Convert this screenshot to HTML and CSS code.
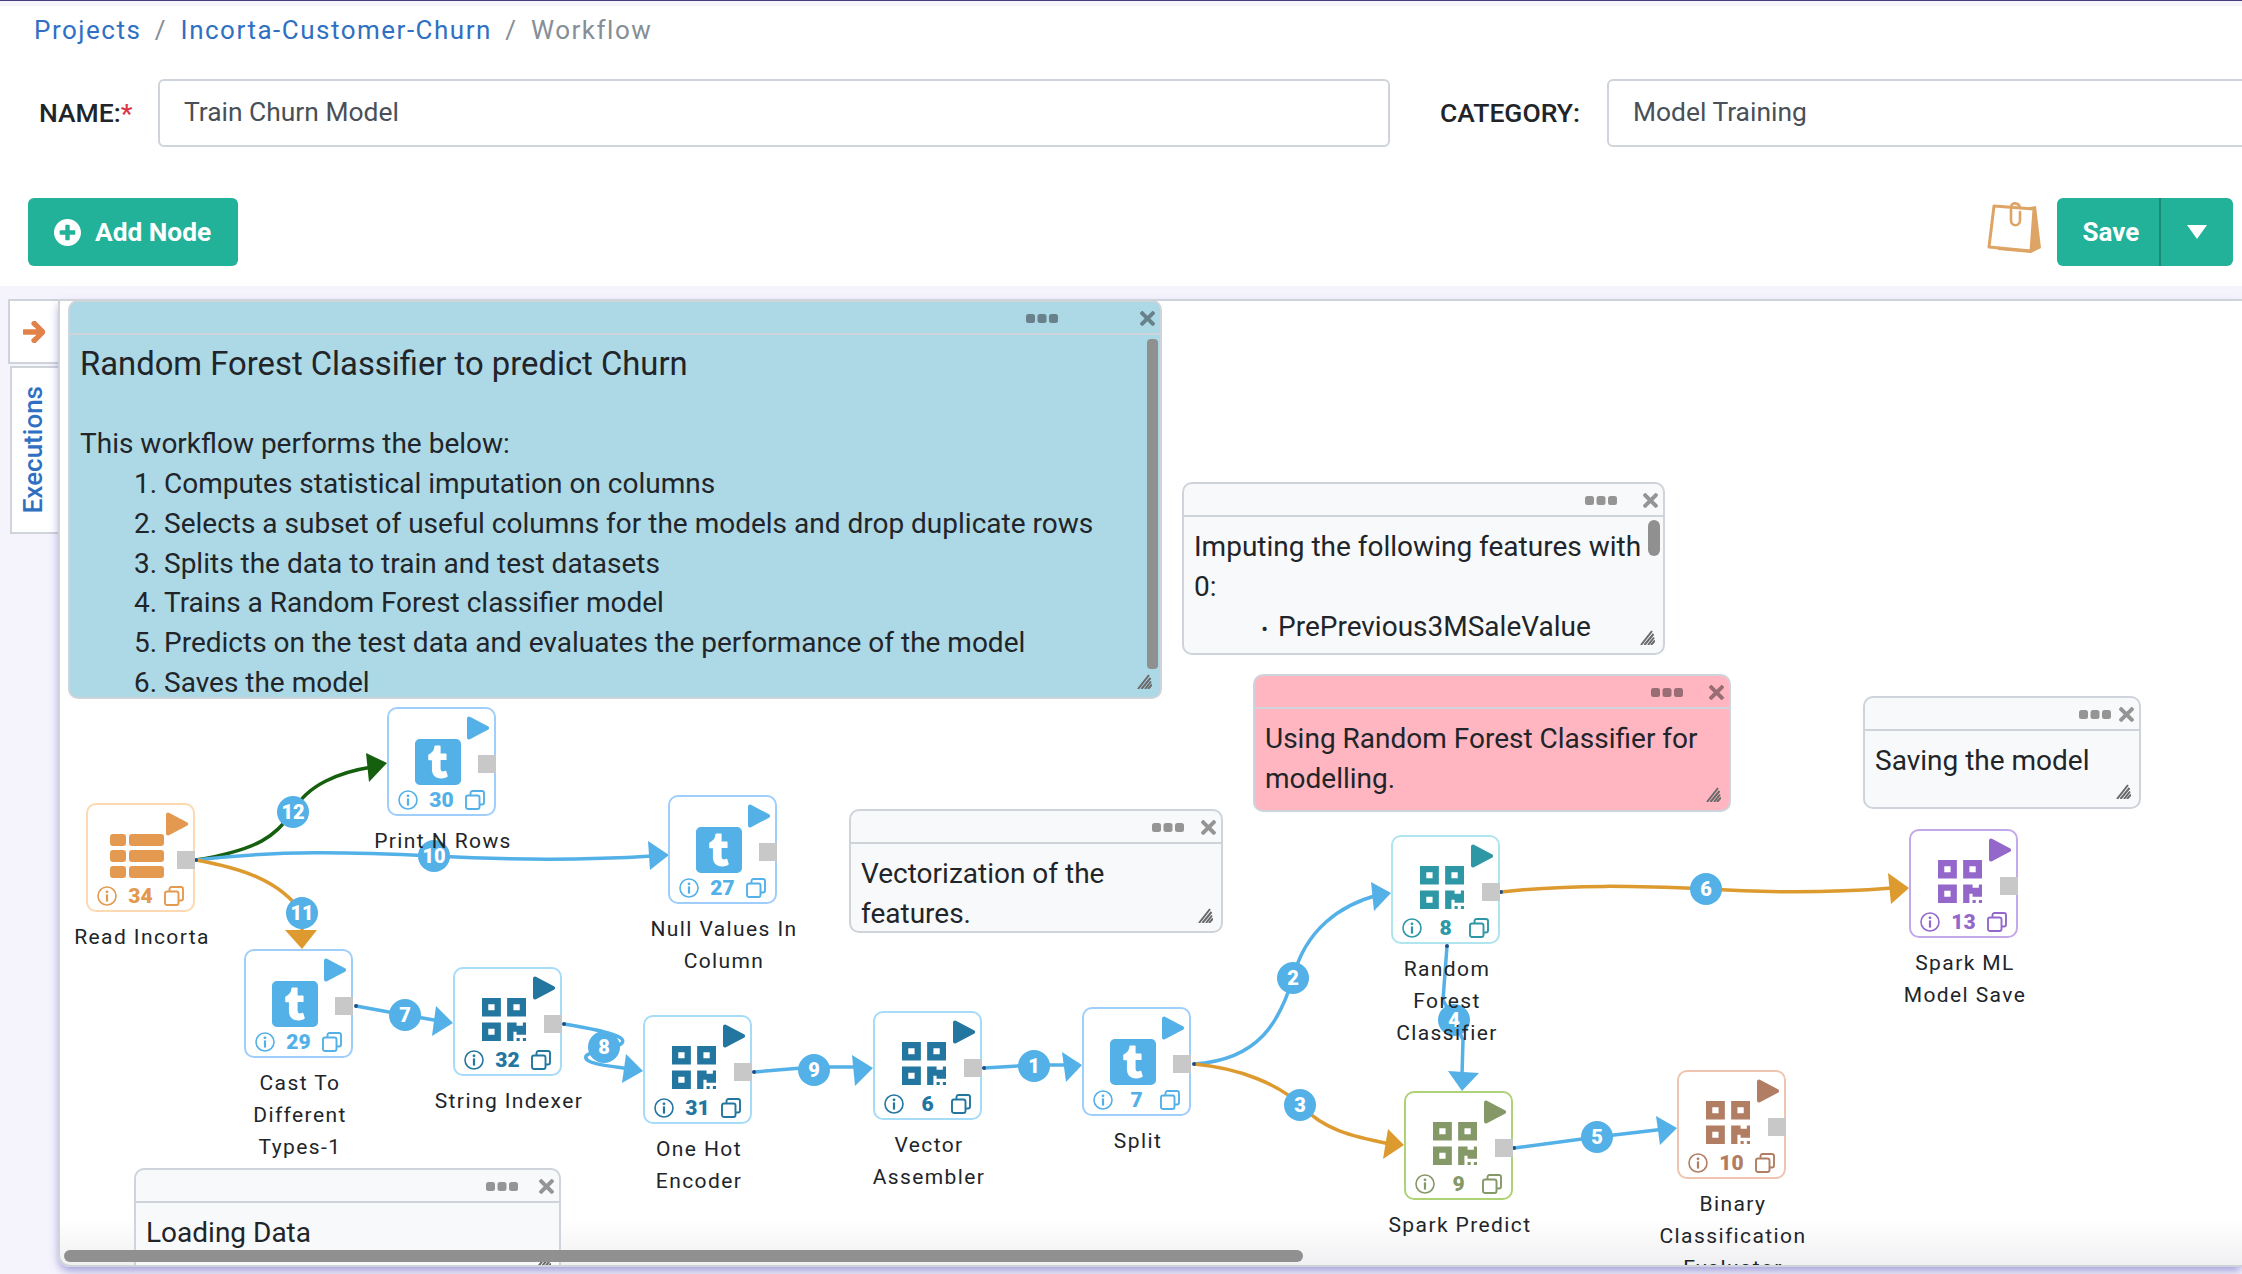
FILE: index.html
```html
<!DOCTYPE html>
<html lang="en">
<head>
  <meta charset="UTF-8" />
  <meta name="viewport" content="width=device-width, initial-scale=1.0"/>
  <title>Workflow</title>
  <link rel="stylesheet" href="styles.css">
</head>
<body>

  <!-- icon sprite -->
  <svg class="sprite" aria-hidden="true">
    <symbol id="i-plus" viewBox="8 8 496 496"><path fill="currentColor" d="M256 8C119 8 8 119 8 256s111 248 248 248 248-111 248-248S393 8 256 8zm144 276c0 6.6-5.4 12-12 12h-92v92c0 6.6-5.4 12-12 12h-56c-6.6 0-12-5.4-12-12v-92h-92c-6.6 0-12-5.4-12-12v-56c0-6.6 5.4-12 12-12h92v-92c0-6.6 5.4-12 12-12h56c6.6 0 12 5.4 12 12v92h92c6.6 0 12 5.4 12 12v56z"/></symbol>
    <symbol id="i-arrow" viewBox="0 32 448 448"><path fill="currentColor" d="M190.5 66.9l22.2-22.2c9.4-9.4 24.6-9.4 33.9 0L441 239c9.4 9.4 9.4 24.6 0 33.9L246.6 467.3c-9.4 9.4-24.6 9.4-33.9 0l-22.2-22.2c-9.5-9.5-9.3-25 .4-34.3L311.4 296H24c-13.3 0-24-10.7-24-24v-32c0-13.3 10.7-24 24-24h287.4L190.9 101.2c-9.8-9.3-10-24.8-.4-34.3z"/></symbol>
    <symbol id="i-close" viewBox="0 80 352 352"><path fill="currentColor" d="M242.72 256l100.07-100.07c12.28-12.28 12.28-32.19 0-44.48l-22.24-22.24c-12.28-12.28-32.19-12.28-44.48 0L176 189.28 75.93 89.21c-12.28-12.28-32.19-12.28-44.48 0L9.21 111.45c-12.28 12.28-12.28 32.19 0 44.48L109.28 256 9.21 356.07c-12.28 12.28-12.28 32.19 0 44.48l22.24 22.24c12.28 12.28 32.2 12.28 44.48 0L176 322.72l100.07 100.07c12.28 12.28 32.2 12.28 44.48 0l22.24-22.24c12.28-12.28 12.28-32.19 0-44.48L242.72 256z"/></symbol>
    <symbol id="i-dots" viewBox="0 0 32 9"><rect width="9" height="9" rx="2.5" fill="currentColor"/><rect x="11.5" width="9" height="9" rx="2.5" fill="currentColor"/><rect x="23" width="9" height="9" rx="2.5" fill="currentColor"/></symbol>
    <symbol id="i-grip" viewBox="0 0 15 15"><path fill="none" stroke="currentColor" stroke-width="2" d="M1 15L12 1M4.5 15L13.5 4M8 15L14 7.5M11 15L15 10.5"/></symbol>
    <symbol id="i-play" viewBox="0 0 22 24"><path fill="currentColor" stroke="currentColor" stroke-width="4" stroke-linejoin="round" d="M2 2.5L20 12L2 21.5z"/></symbol>
    <symbol id="i-info" viewBox="0 0 20 20"><circle cx="10" cy="10" r="9" fill="none" stroke="currentColor" stroke-width="1.6"/><circle cx="10" cy="5.8" r="1.4" fill="currentColor"/><rect x="8.9" y="8.4" width="2.2" height="7.2" fill="currentColor"/></symbol>
    <symbol id="i-copy" viewBox="0 0 20 20"><rect x="1" y="5.5" width="13.5" height="13.5" rx="2" fill="none" stroke="currentColor" stroke-width="1.9"/><path fill="none" stroke="currentColor" stroke-width="1.9" d="M5.5 5.5V3a2 2 0 0 1 2-2H17a2 2 0 0 1 2 2v9.5a2 2 0 0 1-2 2h-2.5"/></symbol>
    <symbol id="i-table" viewBox="0 0 54 44"><g fill="currentColor"><rect width="16" height="12" rx="3"/><rect x="19" width="35" height="12" rx="3"/><rect y="16" width="16" height="12" rx="3"/><rect x="19" y="16" width="35" height="12" rx="3"/><rect y="32" width="16" height="12" rx="3"/><rect x="19" y="32" width="35" height="12" rx="3"/></g></symbol>
    <symbol id="i-tumblr" viewBox="0 32 448 448"><path fill="currentColor" d="M400 32H48C21.5 32 0 53.5 0 80v352c0 26.5 21.5 48 48 48h352c26.5 0 48-21.5 48-48V80c0-26.5-21.5-48-48-48zm-82.3 364.2c-8.5 9.1-31.2 19.8-60.9 19.8-75.5 0-91.9-55.5-91.9-87.9v-90h-29.7c-3.4 0-6.2-2.8-6.2-6.2v-42.5c0-4.5 2.8-8.5 7.1-10 38.8-13.7 50.9-47.5 52.7-73.2.5-6.9 4.1-10.2 10-10.2h44.3c3.4 0 6.2 2.8 6.2 6.2v72h51.9c3.4 0 6.2 2.8 6.2 6.2v51.1c0 3.4-2.8 6.2-6.2 6.2h-52.1V321c0 21.4 14.8 33.5 42.5 22.4 3-1.2 5.6-2 8-1.4 2.2.5 3.6 2.1 4.6 4.9l13.8 40.2c1 3.2 2 6.7-.3 9.1z"/></symbol>
    <symbol id="i-qr" viewBox="0 32 448 448" preserveAspectRatio="none"><path fill="currentColor" d="M0 224h192V32H0v192zM64 96h64v64H64V96zm192-64v192h192V32H256zm128 128h-64V96h64v64zM0 480h192V288H0v192zm64-128h64v64H64v-64zm352-64h32v128h-96v-32h-32v96h-64V288h96v32h64v-32zm0 160h32v32h-32v-32zm-64 0h32v32h-32v-32z"/></symbol>
  </svg>

  <header class="header">
    <nav class="crumbs">
      <a class="crumb-link">Projects</a><span class="crumb-sep">/</span>
      <a class="crumb-link">Incorta-Customer-Churn</a><span class="crumb-sep">/</span>
      <span class="crumb-now">Workflow</span>
    </nav>

    <div class="form-row">
      <label class="form-label form-label-name">NAME:<span class="req">*</span></label>
      <input class="form-input form-input-name" type="text" value="Train Churn Model" />
      <label class="form-label form-label-cat">CATEGORY:</label>
      <input class="form-input form-input-cat" type="text" value="Model Training" />
    </div>

    <div class="action-row">
      <button class="btn btn-add">
        <svg class="btn-icon"><use href="#i-plus"/></svg>Add Node
      </button>
      <div class="action-right">
        <svg class="sticky" viewBox="0 0 54 52">
          <path fill="#dea465" d="M38 6L49 4L54 46L44 51L11 48L11 44L42 46z"/>
          <path fill="#fff" stroke="#dea465" stroke-width="3" stroke-linejoin="round" d="M7 4L47 7L44 49L2 45z"/>
          <path fill="none" stroke="#dea465" stroke-width="2.6" stroke-linecap="round" d="M33 6C32 0 24 0 24 5V18C24 25 33 25 33 18V10"/>
        </svg>
        <div class="save-group">
          <button class="btn btn-save">Save</button>
          <button class="btn btn-caret"><span class="caret"></span></button>
        </div>
      </div>
    </div>
  </header>

  <div class="workspace">
    <aside class="side">
      <div class="side-arrow"><svg class="side-arrow-icon"><use href="#i-arrow"/></svg></div>
      <div class="side-tab"><span class="side-tab-text">Executions</span></div>
    </aside>

    <main class="canvas">
      <!-- edges use page coordinates -->
      <svg class="edges" viewBox="60 301 2182 966">
        <g class="edge edge-green">
          <path d="M196 860C268 848 276 832 293 812C306 785 340 772 372 767"/>
          <polygon points="387,763 366,753 369,782"/>
        </g>
        <g class="edge edge-blue">
          <path d="M196 860C280 850 350 852 434 856C510 860 590 860 652 856"/>
          <polygon points="669,855 648,841 650,870"/>
        </g>
        <g class="edge edge-orange">
          <path d="M196 860C240 868 280 880 302 913V934"/>
          <polygon points="302,949 285,930 317,930"/>
        </g>
        <g class="edge edge-blue">
          <path d="M356 1006L405 1015L440 1021"/>
          <polygon points="453,1023 436,1006 432,1036"/>
        </g>
        <g class="edge edge-blue">
          <path d="M564 1024C600 1030 628 1036 622 1043C616 1050 590 1050 586 1056C583 1064 610 1066 630 1069"/>
          <polygon points="643,1071 626,1054 622,1083"/>
        </g>
        <g class="edge edge-blue">
          <path d="M754 1072L814 1067L860 1067"/>
          <polygon points="873,1068 852,1055 855,1086"/>
        </g>
        <g class="edge edge-blue">
          <path d="M984 1068L1034 1065L1070 1065"/>
          <polygon points="1082,1065 1062,1052 1066,1082"/>
        </g>
        <g class="edge edge-blue">
          <path d="M1194 1064C1260 1060 1280 1020 1293 978C1305 930 1340 905 1378 895"/>
          <polygon points="1391,893 1371,882 1374,911"/>
        </g>
        <g class="edge edge-orange">
          <path d="M1194 1064C1240 1068 1280 1085 1300 1105C1325 1130 1350 1136 1390 1144"/>
          <polygon points="1404,1145 1388,1129 1383,1159"/>
        </g>
        <g class="edge edge-blue">
          <path d="M1447 946L1443 1000L1454 1020L1463 1040L1462 1075"/>
          <polygon points="1462,1091 1448,1071 1479,1073"/>
        </g>
        <g class="edge edge-orange">
          <path d="M1501 892C1570 884 1640 886 1706 889C1770 893 1830 893 1892 888"/>
          <polygon points="1909,888 1888,873 1891,904"/>
        </g>
        <g class="edge edge-blue">
          <path d="M1514 1148L1597 1137L1665 1129"/>
          <polygon points="1677,1128 1656,1116 1660,1145"/>
        </g>

        <g class="edge-starts">
          <circle cx="196" cy="860" r="2"/><circle cx="356" cy="1006" r="2"/><circle cx="564" cy="1024" r="2"/>
          <circle cx="754" cy="1072" r="2"/><circle cx="984" cy="1068" r="2"/><circle cx="1194" cy="1064" r="2"/>
          <circle cx="1447" cy="946" r="2"/><circle cx="1501" cy="892" r="2"/><circle cx="1514" cy="1148" r="2"/>
        </g>

        <g class="badges">
          <circle cx="293" cy="812" r="16"/><text x="293" y="812">12</text>
          <circle cx="434" cy="856" r="16"/><text x="434" y="856">10</text>
          <circle cx="302" cy="913" r="16"/><text x="302" y="913">11</text>
          <circle cx="405" cy="1015" r="16"/><text x="405" y="1015">7</text>
          <circle cx="604" cy="1047" r="16"/><text x="604" y="1047">8</text>
          <circle cx="814" cy="1070" r="16"/><text x="814" y="1070">9</text>
          <circle cx="1034" cy="1066" r="16"/><text x="1034" y="1066">1</text>
          <circle cx="1293" cy="978" r="16"/><text x="1293" y="978">2</text>
          <circle cx="1300" cy="1105" r="16"/><text x="1300" y="1105">3</text>
          <circle cx="1454" cy="1020" r="16"/><text x="1454" y="1020">4</text>
          <circle cx="1706" cy="889" r="16"/><text x="1706" y="889">6</text>
          <circle cx="1597" cy="1137" r="16"/><text x="1597" y="1137">5</text>
        </g>
      </svg>

      <div class="node node-read tone-orange">
        <div class="node-box">
          <svg class="node-play"><use href="#i-play"/></svg>
          <svg class="node-icon node-icon-table"><use href="#i-table"/></svg>
          <span class="node-port"></span>
          <div class="node-foot"><svg class="foot-icon"><use href="#i-info"/></svg><b>34</b><svg class="foot-icon"><use href="#i-copy"/></svg></div>
        </div>
        <div class="node-label">Read Incorta</div>
      </div>

      <div class="node node-print tone-sky">
        <div class="node-box">
          <svg class="node-play"><use href="#i-play"/></svg>
          <svg class="node-icon node-icon-t"><use href="#i-tumblr"/></svg>
          <span class="node-port"></span>
          <div class="node-foot"><svg class="foot-icon"><use href="#i-info"/></svg><b>30</b><svg class="foot-icon"><use href="#i-copy"/></svg></div>
        </div>
        <div class="node-label">Print N Rows</div>
      </div>

      <div class="node node-null tone-sky">
        <div class="node-box">
          <svg class="node-play"><use href="#i-play"/></svg>
          <svg class="node-icon node-icon-t"><use href="#i-tumblr"/></svg>
          <span class="node-port"></span>
          <div class="node-foot"><svg class="foot-icon"><use href="#i-info"/></svg><b>27</b><svg class="foot-icon"><use href="#i-copy"/></svg></div>
        </div>
        <div class="node-label">Null Values In<br>Column</div>
      </div>

      <div class="node node-cast tone-sky">
        <div class="node-box">
          <svg class="node-play"><use href="#i-play"/></svg>
          <svg class="node-icon node-icon-t"><use href="#i-tumblr"/></svg>
          <span class="node-port"></span>
          <div class="node-foot"><svg class="foot-icon"><use href="#i-info"/></svg><b>29</b><svg class="foot-icon"><use href="#i-copy"/></svg></div>
        </div>
        <div class="node-label">Cast To<br>Different<br>Types-1</div>
      </div>

      <div class="node node-string tone-blue">
        <div class="node-box">
          <svg class="node-play"><use href="#i-play"/></svg>
          <svg class="node-icon node-icon-qr"><use href="#i-qr"/></svg>
          <span class="node-port"></span>
          <div class="node-foot"><svg class="foot-icon"><use href="#i-info"/></svg><b>32</b><svg class="foot-icon"><use href="#i-copy"/></svg></div>
        </div>
        <div class="node-label">String Indexer</div>
      </div>

      <div class="node node-onehot tone-blue">
        <div class="node-box">
          <svg class="node-play"><use href="#i-play"/></svg>
          <svg class="node-icon node-icon-qr"><use href="#i-qr"/></svg>
          <span class="node-port"></span>
          <div class="node-foot"><svg class="foot-icon"><use href="#i-info"/></svg><b>31</b><svg class="foot-icon"><use href="#i-copy"/></svg></div>
        </div>
        <div class="node-label">One Hot<br>Encoder</div>
      </div>

      <div class="node node-vector tone-blue">
        <div class="node-box">
          <svg class="node-play"><use href="#i-play"/></svg>
          <svg class="node-icon node-icon-qr"><use href="#i-qr"/></svg>
          <span class="node-port"></span>
          <div class="node-foot"><svg class="foot-icon"><use href="#i-info"/></svg><b>6</b><svg class="foot-icon"><use href="#i-copy"/></svg></div>
        </div>
        <div class="node-label">Vector<br>Assembler</div>
      </div>

      <div class="node node-split tone-sky">
        <div class="node-box">
          <svg class="node-play"><use href="#i-play"/></svg>
          <svg class="node-icon node-icon-t"><use href="#i-tumblr"/></svg>
          <span class="node-port"></span>
          <div class="node-foot"><svg class="foot-icon"><use href="#i-info"/></svg><b>7</b><svg class="foot-icon"><use href="#i-copy"/></svg></div>
        </div>
        <div class="node-label">Split</div>
      </div>

      <div class="node node-forest tone-teal">
        <div class="node-box">
          <svg class="node-play"><use href="#i-play"/></svg>
          <svg class="node-icon node-icon-qr"><use href="#i-qr"/></svg>
          <span class="node-port"></span>
          <div class="node-foot"><svg class="foot-icon"><use href="#i-info"/></svg><b>8</b><svg class="foot-icon"><use href="#i-copy"/></svg></div>
        </div>
        <div class="node-label">Random<br>Forest<br>Classifier</div>
      </div>

      <div class="node node-predict tone-green">
        <div class="node-box">
          <svg class="node-play"><use href="#i-play"/></svg>
          <svg class="node-icon node-icon-qr"><use href="#i-qr"/></svg>
          <span class="node-port"></span>
          <div class="node-foot"><svg class="foot-icon"><use href="#i-info"/></svg><b>9</b><svg class="foot-icon"><use href="#i-copy"/></svg></div>
        </div>
        <div class="node-label">Spark Predict</div>
      </div>

      <div class="node node-binary tone-brown">
        <div class="node-box">
          <svg class="node-play"><use href="#i-play"/></svg>
          <svg class="node-icon node-icon-qr"><use href="#i-qr"/></svg>
          <span class="node-port"></span>
          <div class="node-foot"><svg class="foot-icon"><use href="#i-info"/></svg><b>10</b><svg class="foot-icon"><use href="#i-copy"/></svg></div>
        </div>
        <div class="node-label">Binary<br>Classification<br>Evaluator</div>
      </div>

      <div class="node node-model tone-purple">
        <div class="node-box">
          <svg class="node-play"><use href="#i-play"/></svg>
          <svg class="node-icon node-icon-qr"><use href="#i-qr"/></svg>
          <span class="node-port"></span>
          <div class="node-foot"><svg class="foot-icon"><use href="#i-info"/></svg><b>13</b><svg class="foot-icon"><use href="#i-copy"/></svg></div>
        </div>
        <div class="node-label">Spark ML<br>Model Save</div>
      </div>

      <section class="note note-intro">
        <div class="note-head"><svg class="note-dots"><use href="#i-dots"/></svg><svg class="note-close"><use href="#i-close"/></svg></div>
        <div class="note-body">
          <div class="note-title">Random Forest Classifier to predict Churn</div>
          <br>
          This workflow performs the below:
          <ol class="note-list">
            <li>Computes statistical imputation on columns</li>
            <li>Selects a subset of useful columns for the models and drop duplicate rows</li>
            <li>Splits the data to train and test datasets</li>
            <li>Trains a Random Forest classifier model</li>
            <li>Predicts on the test data and evaluates the performance of the model</li>
            <li>Saves the model</li>
          </ol>
        </div>
        <span class="note-thumb"></span>
        <svg class="note-grip"><use href="#i-grip"/></svg>
      </section>

      <section class="note note-impute">
        <div class="note-head"><svg class="note-dots"><use href="#i-dots"/></svg><svg class="note-close"><use href="#i-close"/></svg></div>
        <div class="note-body">
          Imputing the following features with 0:
          <ul class="note-list"><li>PrePrevious3MSaleValue</li></ul>
        </div>
        <span class="note-thumb"></span>
        <svg class="note-grip"><use href="#i-grip"/></svg>
      </section>

      <section class="note note-forest">
        <div class="note-head"><svg class="note-dots"><use href="#i-dots"/></svg><svg class="note-close"><use href="#i-close"/></svg></div>
        <div class="note-body">Using Random Forest Classifier for modelling.</div>
        <svg class="note-grip"><use href="#i-grip"/></svg>
      </section>

      <section class="note note-saving">
        <div class="note-head"><svg class="note-dots"><use href="#i-dots"/></svg><svg class="note-close"><use href="#i-close"/></svg></div>
        <div class="note-body">Saving the model</div>
        <svg class="note-grip"><use href="#i-grip"/></svg>
      </section>

      <section class="note note-vector">
        <div class="note-head"><svg class="note-dots"><use href="#i-dots"/></svg><svg class="note-close"><use href="#i-close"/></svg></div>
        <div class="note-body">Vectorization of the features.</div>
        <svg class="note-grip"><use href="#i-grip"/></svg>
      </section>

      <section class="note note-loading">
        <div class="note-head"><svg class="note-dots"><use href="#i-dots"/></svg><svg class="note-close"><use href="#i-close"/></svg></div>
        <div class="note-body">Loading Data</div>
        <svg class="note-grip"><use href="#i-grip"/></svg>
      </section>

      <div class="canvas-scroll"></div>
    </main>
  </div>

</body>
</html>
```

FILE: styles.css
```css
* {
  box-sizing: border-box;
}

html, body {
  height: 100%;
}

body {
  margin: 0;
  background: #f5f4fd;
  border-top: 1px solid #4a3b7a;
  font-family: 'Roboto', sans-serif;
  color: #212529;
  overflow: hidden;
}

.sprite {
  display: none;
}

/* header */

.header {
  margin-top: 5px;
  height: 280px;
  background: #fff;
  padding: 0 9px 0 28px;
}

.crumbs {
  display: flex;
  height: 48px;
  align-items: center;
  padding-left: 6px;
  font-size: 26px;
  letter-spacing: 1.5px;
}

.crumb-link {
  color: #2f70c2;
}

.crumb-now {
  color: #868e96;
}

.crumb-sep {
  color: #868e96;
  margin: 0 13.5px;
}

.form-row {
  display: flex;
  align-items: center;
  margin-top: 25px;
  margin-right: -9px;
  height: 68px;
}

.form-label {
  font-size: 26.5px;
  font-weight: 500;
  color: #212529;
  flex: none;
  padding-bottom: 2px;
}

.form-label-name {
  margin-left: 11px;
  width: 119px;
}

.form-label-cat {
  margin-left: 50px;
  width: 167px;
}

.req {
  color: #dc3545;
}

.form-input {
  height: 68px;
  border: 2px solid #ced4da;
  border-radius: 6px;
  padding: 0 24px 2px;
  font-family: 'Roboto', sans-serif;
  font-size: 26.4px;
  color: #495057;
  background: #fff;
  outline: none;
}

.form-input-name {
  width: 1232px;
  flex: none;
}

.form-input-cat {
  width: 700px;
  flex: none;
}

.action-row {
  display: flex;
  justify-content: space-between;
  margin-top: 51px;
}

.action-right {
  display: flex;
  align-items: flex-start;
  gap: 16px;
}

.btn {
  height: 68px;
  border: none;
  background: #22b199;
  color: #fff;
  font-family: 'Roboto', sans-serif;
  font-size: 26px;
  font-weight: 700;
  cursor: pointer;
}

.btn-add {
  display: flex;
  align-items: center;
  width: 210px;
  padding: 0 0 0 26px;
  border-radius: 6px;
  font-size: 26.3px;
}

.btn-icon {
  width: 27px;
  height: 27px;
  margin-right: 14px;
  color: #fff;
}

.sticky {
  width: 54px;
  height: 52px;
  margin-top: 4px;
}

.save-group {
  display: flex;
}

.btn-save {
  width: 104px;
  padding: 0 0 0 6px;
  border-radius: 6px 0 0 6px;
  border-right: 2px solid #1a8a77;
}

.btn-caret {
  width: 72px;
  border-radius: 0 6px 6px 0;
  display: flex;
  align-items: center;
  justify-content: center;
}

.caret {
  border-left: 10px solid transparent;
  border-right: 10px solid transparent;
  border-top: 14px solid #fff;
}

/* workspace */

.workspace {
  display: flex;
  margin: 13px 0 0 8px;
  height: 968px;
}

.side {
  width: 50px;
  flex: none;
  border-top: 2px solid #ced4da;
}

.side-arrow {
  height: 63px;
  background: #fff;
  border-left: 2px solid #ced4da;
  border-bottom: 2px solid #ced4da;
  display: flex;
  align-items: center;
  justify-content: center;
}

.side-arrow-icon {
  width: 22px;
  height: 22px;
  color: #e2824a;
  stroke: #e2824a;
  stroke-width: 30px;
}

.side-tab {
  margin: 2px 0 0 2px;
  height: 168px;
  background: #fff;
  border: 2px solid #ced4da;
  border-right: none;
  display: flex;
  align-items: center;
  justify-content: center;
  padding-right: 5px;
}

.side-tab-text {
  writing-mode: vertical-rl;
  transform: rotate(180deg);
  font-size: 26px;
  font-weight: 500;
  color: #2f70c2;
}

.canvas {
  position: relative;
  flex: 1;
  background: linear-gradient(to bottom, #fff calc(100% - 46px), #f0f0f2);
  border-top: 2px solid #ced4da;
  border-left: 2px solid #ced4da;
  border-bottom: 2px solid #ced4da;
  border-bottom-left-radius: 12px;
  box-shadow: 0 5px 10px -1px rgba(96, 86, 190, 0.55);
  overflow: hidden;
}

.edges {
  position: absolute;
  left: 0;
  top: 0;
  width: 2182px;
  height: 966px;
}

.edge path {
  fill: none;
  stroke-width: 3.5;
}

.edge-blue path { stroke: #54b1e8; }
.edge-blue polygon { fill: #54b1e8; }
.edge-orange path { stroke: #dc9a2f; }
.edge-orange polygon { fill: #dc9a2f; }
.edge-green path { stroke: #155f0e; }
.edge-green polygon { fill: #155f0e; }

.edge-starts circle {
  fill: #1d4f86;
}

.badges circle {
  fill: #54b1e8;
}

.badges text {
  fill: #fff;
  font-size: 20px;
  font-weight: 900;
  text-anchor: middle;
  dominant-baseline: central;
}

/* nodes */

.node {
  position: absolute;
  width: 109px;
}

.node-read { left: 26px; top: 502px; }
.node-print { left: 327px; top: 406px; }
.node-null { left: 608px; top: 494px; }
.node-cast { left: 184px; top: 648px; }
.node-string { left: 393px; top: 666px; }
.node-onehot { left: 583px; top: 714px; }
.node-vector { left: 813px; top: 710px; }
.node-split { left: 1022px; top: 706px; }
.node-forest { left: 1331px; top: 534px; }
.node-predict { left: 1344px; top: 790px; }
.node-binary { left: 1617px; top: 769px; }
.node-model { left: 1849px; top: 528px; }

.tone-orange { --line: #fdd9b2; --ink: #e39a50; }
.tone-sky { --line: #9fcefb; --ink: #54b1e8; }
.tone-blue { --line: #a6dcf8; --ink: #22769f; }
.tone-teal { --line: #aee5ee; --ink: #2e97a6; }
.tone-green { --line: #aed276; --ink: #859868; }
.tone-brown { --line: #efc4b1; --ink: #b27e63; }
.tone-purple { --line: #c3a8ea; --ink: #9468cb; }

.node-box {
  position: relative;
  height: 109px;
  background: #fff;
  border: 2px solid var(--line);
  border-radius: 10px;
  color: var(--ink);
  display: flex;
  flex-direction: column;
  padding-top: 29px;
}

.node-play {
  position: absolute;
  right: 5px;
  top: 7px;
  width: 22px;
  height: 24px;
}

.node-port {
  position: absolute;
  right: -2px;
  top: 46px;
  width: 18px;
  height: 18px;
  background: #c8c8c8;
}

.node-icon {
  display: block;
  flex: none;
}

.node-icon-table {
  width: 54px;
  height: 44px;
  margin-left: 22px;
}

.node-icon-t {
  width: 46px;
  height: 46px;
  margin-top: 1px;
  margin-left: 26px;
}

.node-icon-qr {
  width: 44px;
  height: 43px;
  margin-left: 27px;
}

.node-foot {
  position: absolute;
  left: 9px;
  right: 9px;
  bottom: 4px;
  height: 20px;
  display: flex;
  align-items: center;
  justify-content: space-between;
  font-size: 21px;
}

.node-foot b {
  font-weight: 900;
}

.foot-icon {
  width: 20px;
  height: 20px;
}

.node-label {
  width: 200px;
  margin: 9px 0 0 -44px;
  text-align: center;
  font-size: 21px;
  line-height: 32px;
  letter-spacing: 1.4px;
  color: #212529;
}

/* notes */

.note {
  position: absolute;
  display: flex;
  flex-direction: column;
  background: #f8f9fa;
  border: 2px solid #ced4da;
  border-radius: 10px;
  overflow: hidden;
}

.note-intro { left: 8px; top: -1px; width: 1094px; height: 399px; background: #add8e6; }
.note-impute { left: 1122px; top: 181px; width: 483px; height: 173px; }
.note-forest { left: 1193px; top: 373px; width: 478px; height: 138px; background: #ffb6c1; }
.note-saving { left: 1803px; top: 395px; width: 278px; height: 113px; }
.note-vector { left: 789px; top: 508px; width: 374px; height: 124px; }
.note-loading { left: 74px; top: 867px; width: 427px; height: 110px; }

.note-head {
  flex: none;
  height: 33px;
  display: flex;
  align-items: center;
  justify-content: flex-end;
  padding: 2px 5px 0 0;
  border-bottom: 2px solid #ced4da;
  color: rgba(0, 0, 0, 0.4);
}

.note-intro .note-head { gap: 82px; }
.note-impute .note-head { gap: 26px; }
.note-forest .note-head { gap: 26px; }
.note-saving .note-head { gap: 8px; }
.note-vector .note-head { gap: 17px; }
.note-loading .note-head { gap: 21px; }

.note-dots {
  width: 32px;
  height: 9px;
}

.note-close {
  width: 15px;
  height: 15px;
}

.note-body {
  padding: 10px 10px 0;
  font-size: 28px;
  line-height: 40px;
  color: #212529;
  flex: 1;
  overflow: hidden;
}

.note-intro .note-body {
  padding-top: 9px;
}

.note-intro .note-list {
  line-height: 39.8px;
}

.note-title {
  font-size: 32.8px;
}

.note-list {
  margin: 0;
  padding-left: 84px;
}

ul.note-list li::marker {
  content: "\2022\00a0\00a0";
  font-size: 20px;
}

.note-thumb {
  position: absolute;
  right: 3px;
  top: 36px;
  width: 12px;
  height: 36px;
  border-radius: 6px;
  background: #909090;
}

.note-intro .note-thumb {
  right: 2px;
  width: 11px;
  height: 330px;
  top: 37px;
  border-radius: 4px;
}

.note-grip {
  position: absolute;
  right: 8px;
  bottom: 8px;
  width: 15px;
  height: 15px;
  color: #6a6a6a;
}

/* canvas bottom */

.canvas-scroll {
  position: absolute;
  left: 4px;
  bottom: 3px;
  width: 1239px;
  height: 12px;
  border-radius: 6px;
  background: #909090;
}
```
